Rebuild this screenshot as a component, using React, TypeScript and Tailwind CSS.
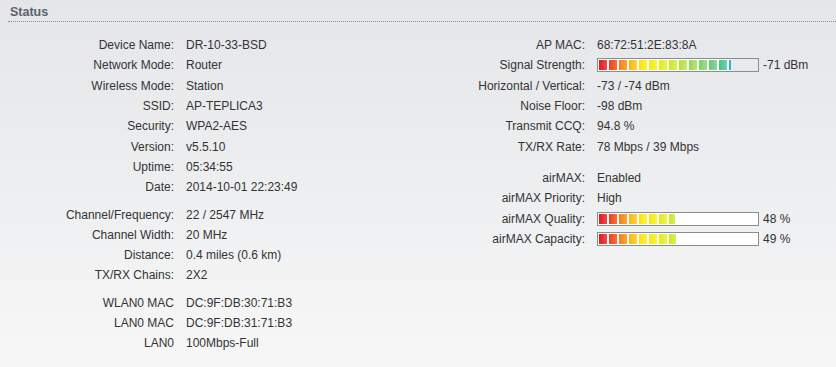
import React from 'react';

const SEGMENTS = [
  'from-[#e2141b] to-[#f5454b]',
  'from-[#ef3f16] to-[#fa6b40]',
  'from-[#f47e0e] to-[#fca43c]',
  'from-[#f9b608] to-[#fdd33c]',
  'from-[#fbe000] to-[#fdf044]',
  'from-[#f0ea00] to-[#f8f540]',
  'from-[#dfeb10] to-[#eef44e]',
  'from-[#c9e722] to-[#dcef5a]',
  'from-[#b1e139] to-[#cae96c]',
  'from-[#96d94e] to-[#b5e57f]',
  'from-[#7bd162] to-[#a0dd90]',
  'from-[#60c975] to-[#8bd6a0]',
  'from-[#42c18c] to-[#72cfae]',
  'from-[#1eb9c2] to-[#4ccad4]',
  'from-[#10a9d2] to-[#40bfe0]',
  'from-[#0c97d6] to-[#3cb2e4]',
];

interface Row {
  label: string;
  value: React.ReactNode;
}

function Bar({ pct, empty }: { pct: number; empty: string }) {
  return (
    <div className={`flex h-[14px] w-[162px] border border-[#8c8c8c] ${empty}`}>
      <div
        className="h-full overflow-hidden bg-white py-px pl-px"
        style={{ width: Math.round((pct * 160) / 100) }}
      >
        <div className="flex h-full gap-[2px]">
          {SEGMENTS.map((s) => (
            <div key={s} className={`h-full w-[8px] shrink-0 bg-linear-to-r ${s}`} />
          ))}
        </div>
      </div>
    </div>
  );
}

function Group({ rows, labelW, className = '' }: { rows: Row[]; labelW: string; className?: string }) {
  return (
    <div className={className}>
      {rows.map((r) => (
        <div key={r.label} className="flex h-[20.3px] items-center">
          <div className={`${labelW} shrink-0 text-right`}>{r.label}</div>
          <div className="flex items-center pl-[12px]">{r.value}</div>
        </div>
      ))}
    </div>
  );
}

export default function App() {
  return (
    <div
      className="h-[367px] w-[836px] bg-linear-to-b from-[#e4e6e9] to-[#f7f7f7] text-[12px] text-[#333]"
      style={{ fontFamily: '"Liberation Sans", Arial, sans-serif' }}
    >
      {/* Header */}
      <div className="ml-[8px] h-[22px] border-b border-dotted border-[#8a8a8a] pl-[2px] pt-[5px] text-[12.5px] font-bold leading-[15px] text-[#5b626c]">
        Status
      </div>

      <div className="mt-[13px] flex">
        {/* Left column */}
        <div className="w-[418px]">
          <Group
            labelW="w-[174px]"
            rows={[
              { label: 'Device Name:', value: 'DR-10-33-BSD' },
              { label: 'Network Mode:', value: 'Router' },
              { label: 'Wireless Mode:', value: 'Station' },
              { label: 'SSID:', value: 'AP-TEPLICA3' },
              { label: 'Security:', value: 'WPA2-AES' },
              { label: 'Version:', value: 'v5.5.10' },
              { label: 'Uptime:', value: '05:34:55' },
              { label: 'Date:', value: '2014-10-01 22:23:49' },
            ]}
          />
          <Group
            labelW="w-[174px]"
            className="mt-[7px]"
            rows={[
              { label: 'Channel/Frequency:', value: '22 / 2547 MHz' },
              { label: 'Channel Width:', value: '20 MHz' },
              { label: 'Distance:', value: '0.4 miles (0.6 km)' },
              { label: 'TX/RX Chains:', value: '2X2' },
            ]}
          />
          <Group
            labelW="w-[174px]"
            className="mt-[7px]"
            rows={[
              { label: 'WLAN0 MAC', value: 'DC:9F:DB:30:71:B3' },
              { label: 'LAN0 MAC', value: 'DC:9F:DB:31:71:B3' },
              { label: 'LAN0', value: '100Mbps-Full' },
            ]}
          />
        </div>

        {/* Right column */}
        <div className="flex-1">
          <Group
            labelW="w-[167px]"
            rows={[
              { label: 'AP MAC:', value: '68:72:51:2E:83:8A' },
              {
                label: 'Signal Strength:',
                value: (
                  <>
                    <Bar pct={83} empty="bg-[#e9eaee]" />
                    <span className="ml-[4px]">-71 dBm</span>
                  </>
                ),
              },
              { label: 'Horizontal / Vertical:', value: '-73 / -74 dBm' },
              { label: 'Noise Floor:', value: '-98 dBm' },
              { label: 'Transmit CCQ:', value: '94.8 %' },
              { label: 'TX/RX Rate:', value: '78 Mbps / 39 Mbps' },
            ]}
          />
          <Group
            labelW="w-[167px]"
            className="mt-[11px]"
            rows={[
              { label: 'airMAX:', value: 'Enabled' },
              { label: 'airMAX Priority:', value: 'High' },
              {
                label: 'airMAX Quality:',
                value: (
                  <>
                    <Bar pct={48} empty="bg-white" />
                    <span className="ml-[4px]">48 %</span>
                  </>
                ),
              },
              {
                label: 'airMAX Capacity:',
                value: (
                  <>
                    <Bar pct={49} empty="bg-white" />
                    <span className="ml-[4px]">49 %</span>
                  </>
                ),
              },
            ]}
          />
        </div>
      </div>
    </div>
  );
}
